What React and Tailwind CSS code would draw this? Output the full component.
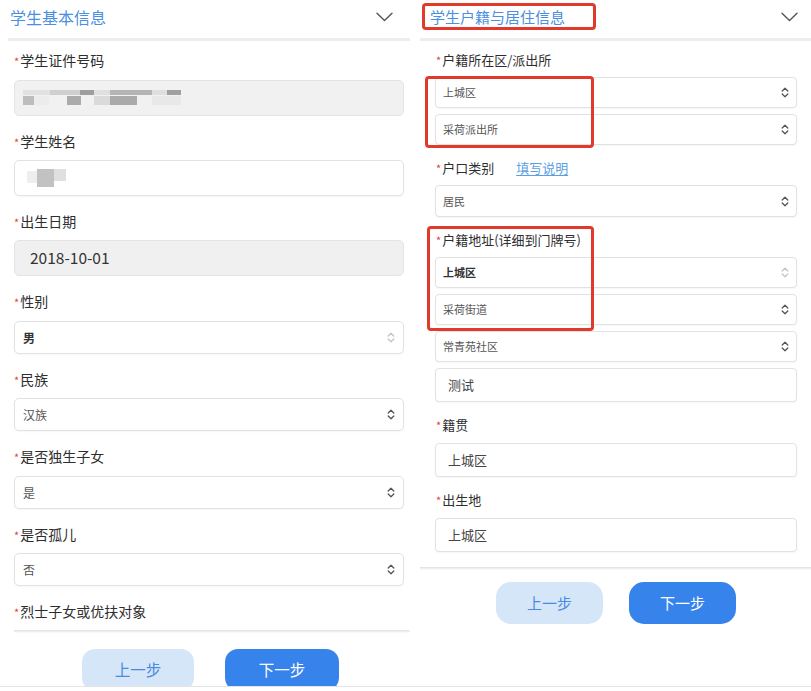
import React from "react";

function UpDown({ light }) {
  return (
    <svg width="8" height="11" viewBox="0 0 8 11" fill="none" stroke={light ? "#c4c4c4" : "#555"} strokeWidth="1.3" strokeLinecap="round" strokeLinejoin="round">
      <path d="M1.2 4 L4 1.2 L6.8 4" />
      <path d="M1.2 7 L4 9.8 L6.8 7" />
    </svg>
  );
}

function Chevron() {
  return (
    <svg width="17" height="10" viewBox="0 0 17 10" fill="none" stroke="#555" strokeWidth="1.4" strokeLinecap="round" strokeLinejoin="round">
      <path d="M1 1.2 L8.5 8.6 L16 1.2" />
    </svg>
  );
}

function Star() {
  return <span className="text-[#e0443a] text-[11px] mr-[1px]">*</span>;
}

function LSelect({ value, light, bold }) {
  return (
    <div className="h-[33px] shrink-0 border border-[#e2e2e2] rounded-[5px] flex items-center justify-between pl-[8px] pr-[8px] bg-white shadow-[0_1px_2px_rgba(0,0,0,0.04)]">
      <span className={bold ? "text-[12px] text-[#333] font-bold" : "text-[12px] text-[#555]"}>{value}</span>
      <UpDown light={light} />
    </div>
  );
}

function RSelect({ value, light, bold, h }) {
  return (
    <div className={(h === 32 ? "h-[32px]" : "h-[31px]") + " shrink-0 border border-[#e2e2e2] rounded-[4px] flex items-center justify-between pl-[7px] pr-[7px] bg-white shadow-[0_1px_2px_rgba(0,0,0,0.04)]"}>
      <span className={bold ? "text-[11px] text-[#333] font-bold" : "text-[11px] text-[#555]"}>{value}</span>
      <UpDown light={light} />
    </div>
  );
}

function RInput({ value }) {
  return (
    <div className="h-[34px] shrink-0 border border-[#e2e2e2] rounded-[4px] flex items-center pl-[12px] bg-white shadow-[0_1px_2px_rgba(0,0,0,0.04)]">
      <span className="text-[13px] text-[#444]">{value}</span>
    </div>
  );
}

function Mosaic1() {
  return (
    <svg width="160" height="16" viewBox="0 0 160 16">
      <rect x="0" y="0" width="27" height="5" fill="#e2e2e2" />
      <rect x="27" y="0" width="30" height="5" fill="#cfcfcf" />
      <rect x="57" y="0" width="14" height="5" fill="#9e9e9e" />
      <rect x="71" y="0" width="16" height="5" fill="#e0e0e0" />
      <rect x="87" y="0" width="42" height="5" fill="#b5b5b5" />
      <rect x="129" y="0" width="15" height="5" fill="#dedede" />
      <rect x="144" y="0" width="14" height="5" fill="#a0a0a0" />
      <rect x="0" y="6" width="11" height="9" fill="#bdbdbd" />
      <rect x="11" y="6" width="15" height="9" fill="#ececec" />
      <rect x="44" y="6" width="14" height="9" fill="#ababab" />
      <rect x="71" y="6" width="16" height="9" fill="#dadada" />
      <rect x="87" y="6" width="27" height="9" fill="#aaaaaa" />
      <rect x="129" y="6" width="29" height="9" fill="#e8e8e8" />
    </svg>
  );
}

function Mosaic2() {
  return (
    <svg width="40" height="18" viewBox="0 0 40 18">
      <rect x="0" y="2" width="10" height="12" fill="#eeeeee" />
      <rect x="10" y="0" width="17" height="18" fill="#c2c2c2" />
      <rect x="27" y="0" width="12" height="12" fill="#e0e0e0" />
    </svg>
  );
}

function LLabel({ text, first, tall }) {
  return (
    <div className={(first ? "h-[39px] pt-[9px]" : tall ? "h-[45px] pt-[15px]" : "h-[44px] pt-[15px]") + " shrink-0 text-[14px] leading-[20px] text-[#2e2e2e] whitespace-nowrap"}>
      <Star />
      <span>{text}</span>
    </div>
  );
}

function RLabel({ text, first, h41, extra }) {
  return (
    <div className={(first ? "h-[36px] pt-[10px]" : h41 ? "h-[41px] pt-[14px]" : "h-[40px] pt-[14px]") + " shrink-0 text-[13px] leading-[18px] text-[#2e2e2e] pl-[1px] whitespace-nowrap"}>
      <Star />
      <span>{text}</span>
      {extra}
    </div>
  );
}

function LeftPanel() {
  return (
    <div className="w-[410px] h-[686px] flex flex-col overflow-hidden">
      <div className="h-[38px] flex items-center justify-between pl-[10px] pr-[17px] pb-[5px] shrink-0">
        <span className="text-[16px] text-[#4a8fe0] leading-none">学生基本信息</span>
        <Chevron />
      </div>
      <div className="ml-[8px] h-[3px] bg-[#ededed] shrink-0" />
      <div className="pl-[14px] pr-[6px] flex flex-col h-[589px] overflow-hidden shrink-0">
        <LLabel text="学生证件号码" first />
        <div className="h-[36px] shrink-0 rounded-[5px] border border-[#e4e4e4] bg-[#f1f1f1] flex items-center pl-[8px]">
          <Mosaic1 />
        </div>
        <LLabel text="学生姓名" />
        <div className="h-[36px] shrink-0 rounded-[5px] border border-[#e2e2e2] bg-white flex items-center pl-[12px] shadow-[0_1px_2px_rgba(0,0,0,0.04)]">
          <Mosaic2 />
        </div>
        <LLabel text="出生日期" />
        <div className="h-[36px] shrink-0 rounded-[5px] border border-[#e4e4e4] bg-[#f0f0f0] flex items-center pl-[15px]">
          <span className="text-[15.5px] text-[#333]">2018-10-01</span>
        </div>
        <LLabel text="性别" tall />
        <LSelect value="男" light bold />
        <LLabel text="民族" />
        <LSelect value="汉族" />
        <LLabel text="是否独生子女" tall />
        <LSelect value="是" />
        <LLabel text="是否孤儿" />
        <LSelect value="否" />
        <LLabel text="烈士子女或优扶对象" />
        <div className="h-[33px] shrink-0 border border-[#e2e2e2] rounded-[5px]" />
      </div>
      <div className="flex flex-col shrink-0 h-[56px] overflow-hidden">
        <div className="ml-[14px] h-[3px] shrink-0 bg-gradient-to-b from-[#dedede] to-white rounded-r-[2px]" />
        <div className="flex pl-[82px] gap-[31px] pt-[16px] shrink-0">
          <div className="w-[112px] h-[42px] shrink-0 rounded-[13px] bg-[#d6e6f9] flex items-center justify-center text-[15.5px] text-[#4a8ae0]">上一步</div>
          <div className="w-[114px] h-[42px] shrink-0 rounded-[13px] bg-[#3783ec] flex items-center justify-center text-[15.5px] text-white">下一步</div>
        </div>
      </div>
    </div>
  );
}

function RightPanel() {
  return (
    <div className="w-[401px] h-[686px] flex flex-col overflow-hidden relative">
      <div className="h-[38px] flex items-center justify-between pl-[20px] pr-[13px] pb-[5px] shrink-0">
        <span className="text-[15px] text-[#4a8fe0] leading-none">学生户籍与居住信息</span>
        <Chevron />
      </div>
      <div className="ml-[10px] h-[3px] bg-[#ededed] shrink-0" />
      <div className="pl-[25px] pr-[14px] flex flex-col shrink-0">
        <RLabel text="户籍所在区/派出所" first />
        <RSelect value="上城区" />
        <div className="h-[6px] shrink-0" />
        <RSelect value="采荷派出所" />
        <RLabel
          text="户口类别"
          extra={<span className="ml-[22px] text-[#5b9fe3] underline underline-offset-2">填写说明</span>}
        />
        <RSelect value="居民" h={32} />
        <RLabel text="户籍地址(详细到门牌号)" />
        <RSelect value="上城区" light bold />
        <div className="h-[6px] shrink-0" />
        <RSelect value="采荷街道" />
        <div className="h-[6px] shrink-0" />
        <RSelect value="常青苑社区" />
        <div className="h-[6px] shrink-0" />
        <RInput value="测试" />
        <RLabel text="籍贯" h41 />
        <RInput value="上城区" />
        <RLabel text="出生地" h41 />
        <RInput value="上城区" />
      </div>
      <div className="flex flex-col shrink-0 pt-[15px]">
        <div className="ml-[10px] h-[3px] bg-gradient-to-b from-[#dedede] to-white" />
        <div className="flex pl-[86px] gap-[26px] pt-[12px]">
          <div className="w-[107px] h-[42px] rounded-[15px] bg-[#d6e6f9] flex items-center justify-center text-[15px] text-[#4a8ae0]">上一步</div>
          <div className="w-[107px] h-[42px] rounded-[15px] bg-[#3783ec] flex items-center justify-center text-[15px] text-white">下一步</div>
        </div>
      </div>
      <div className="absolute left-[12px] top-[3px] w-[174px] h-[27px] border-[3px] border-[#e2392d] rounded-[4px]" />
      <div className="absolute left-[15px] top-[76px] w-[169px] h-[72px] border-[3px] border-[#e2392d] rounded-[4px]" />
      <div className="absolute left-[17px] top-[226px] w-[167px] h-[105px] border-[3px] border-[#e2392d] rounded-[4px]" />
    </div>
  );
}

export default function App() {
  return (
    <div className="w-[811px] h-[691px] bg-white overflow-hidden flex flex-col font-['Noto_Sans_CJK_SC','Noto_Sans',sans-serif]">
      <div className="flex h-[686px] shrink-0">
        <LeftPanel />
        <RightPanel />
      </div>
      <div className="h-px bg-[#e4e4e4] shrink-0" />
    </div>
  );
}
